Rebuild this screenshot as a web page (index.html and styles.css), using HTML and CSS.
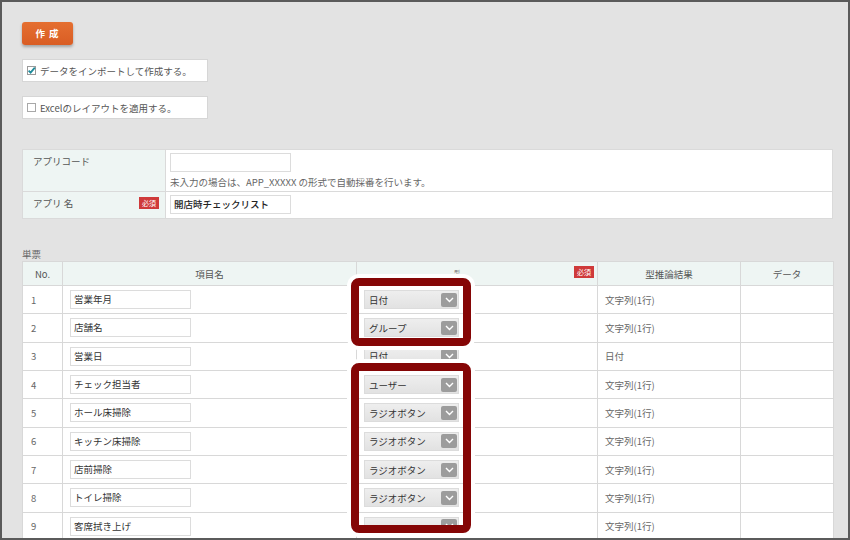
FILE: index.html
```html
<!DOCTYPE html>
<html lang="ja">
<head>
<meta charset="utf-8">
<link rel="stylesheet" href="styles.css">
</head>
<body>
<div class="frame">
  <div class="page">
    <button class="btn-create">作&nbsp;成</button>

    <div class="opt"><span class="cb cb-on"><svg width="9" height="9" viewBox="0 0 9 9"><rect x="0.5" y="0.5" width="8" height="8" fill="#fff" stroke="#9a9a9a"/><path d="M1.6 4.6 L3.6 6.6 L7.8 1.6" fill="none" stroke="#1f8a9a" stroke-width="1.8"/></svg></span>データをインポートして作成する。</div>
    <div class="opt"><span class="cb"><svg width="9" height="9" viewBox="0 0 9 9"><rect x="0.5" y="0.5" width="8" height="8" fill="#fff" stroke="#a8a8a8"/></svg></span>Excelのレイアウトを適用する。</div>

    <table class="form">
      <colgroup><col class="c-label"><col></colgroup>
      <tr class="r-code">
        <th><div class="lab">アプリコード</div></th>
        <td>
          <div class="inp"></div>
          <div class="hint">未入力の場合は、APP_XXXXX の形式で自動採番を行います。</div>
        </td>
      </tr>
      <tr class="r-name">
        <th><div class="lab lab-row"><span>アプリ 名</span><span class="req">必須</span></div></th>
        <td><div class="inp inp-val">開店時チェックリスト</div></td>
      </tr>
    </table>

    <div class="sec-label">単票</div>

    <div class="grid-wrap">
      <table class="grid">
        <colgroup>
          <col class="g1"><col class="g2"><col class="g3"><col class="g4"><col class="g5">
        </colgroup>
        <thead>
          <tr>
            <th>No.</th>
            <th>項目名</th>
            <th class="h-type"><span class="type-lbl">型</span><span class="req req-h">必須</span></th>
            <th>型推論結果</th>
            <th>データ</th>
          </tr>
        </thead>
        <tbody>
          <tr><td class="no">1</td><td><div class="inp">営業年月</div></td><td><div class="sel"><span>日付</span><i class="arr"><svg width="9" height="6" viewBox="0 0 9 6"><path d="M1 1 L4.5 4.5 L8 1" fill="none" stroke="#fff" stroke-width="1.4"/></svg></i></div></td><td class="res">文字列(1行)</td><td></td></tr>
          <tr><td class="no">2</td><td><div class="inp">店舗名</div></td><td><div class="sel"><span>グループ</span><i class="arr"><svg width="9" height="6" viewBox="0 0 9 6"><path d="M1 1 L4.5 4.5 L8 1" fill="none" stroke="#fff" stroke-width="1.4"/></svg></i></div></td><td class="res">文字列(1行)</td><td></td></tr>
          <tr><td class="no">3</td><td><div class="inp">営業日</div></td><td><div class="sel"><span>日付</span><i class="arr"><svg width="9" height="6" viewBox="0 0 9 6"><path d="M1 1 L4.5 4.5 L8 1" fill="none" stroke="#fff" stroke-width="1.4"/></svg></i></div></td><td class="res">日付</td><td></td></tr>
          <tr><td class="no">4</td><td><div class="inp">チェック担当者</div></td><td><div class="sel"><span>ユーザー</span><i class="arr"><svg width="9" height="6" viewBox="0 0 9 6"><path d="M1 1 L4.5 4.5 L8 1" fill="none" stroke="#fff" stroke-width="1.4"/></svg></i></div></td><td class="res">文字列(1行)</td><td></td></tr>
          <tr><td class="no">5</td><td><div class="inp">ホール床掃除</div></td><td><div class="sel"><span>ラジオボタン</span><i class="arr"><svg width="9" height="6" viewBox="0 0 9 6"><path d="M1 1 L4.5 4.5 L8 1" fill="none" stroke="#fff" stroke-width="1.4"/></svg></i></div></td><td class="res">文字列(1行)</td><td></td></tr>
          <tr><td class="no">6</td><td><div class="inp">キッチン床掃除</div></td><td><div class="sel"><span>ラジオボタン</span><i class="arr"><svg width="9" height="6" viewBox="0 0 9 6"><path d="M1 1 L4.5 4.5 L8 1" fill="none" stroke="#fff" stroke-width="1.4"/></svg></i></div></td><td class="res">文字列(1行)</td><td></td></tr>
          <tr><td class="no">7</td><td><div class="inp">店前掃除</div></td><td><div class="sel"><span>ラジオボタン</span><i class="arr"><svg width="9" height="6" viewBox="0 0 9 6"><path d="M1 1 L4.5 4.5 L8 1" fill="none" stroke="#fff" stroke-width="1.4"/></svg></i></div></td><td class="res">文字列(1行)</td><td></td></tr>
          <tr><td class="no">8</td><td><div class="inp">トイレ掃除</div></td><td><div class="sel"><span>ラジオボタン</span><i class="arr"><svg width="9" height="6" viewBox="0 0 9 6"><path d="M1 1 L4.5 4.5 L8 1" fill="none" stroke="#fff" stroke-width="1.4"/></svg></i></div></td><td class="res">文字列(1行)</td><td></td></tr>
          <tr><td class="no">9</td><td><div class="inp">客席拭き上げ</div></td><td><div class="sel sel-cut"><span>ラジオボタン</span><i class="arr"><svg width="9" height="6" viewBox="0 0 9 6"><path d="M1 1 L4.5 4.5 L8 1" fill="none" stroke="#fff" stroke-width="1.4"/></svg></i></div></td><td class="res">文字列(1行)</td><td></td></tr>
        </tbody>
      </table>
      <div class="hl hl-1"></div>
      <div class="hl hl-2"></div>
    </div>
  </div>
</div>
</body>
</html>
```

FILE: styles.css
```css
* { box-sizing: border-box; }
html, body { margin: 0; padding: 0; }
body {
  width: 850px;
  height: 540px;
  overflow: hidden;
  font-family: "Noto Sans CJK JP", "Noto Sans", sans-serif;
  font-size: 9.5px;
  color: #555;
}
.frame {
  width: 850px;
  height: 540px;
  border: 2px solid #5b5b5b;
  background: #e3e3e3;
  overflow: hidden;
}
.page {
  padding: 20px 15px 0 20px;
  display: flex;
  flex-direction: column;
  align-items: flex-start;
}
.btn-create {
  width: 51px;
  height: 23px;
  border: 0;
  border-radius: 3px;
  background: linear-gradient(#e56f31, #d95d24);
  box-shadow: 0 2px 3px rgba(0,0,0,0.28);
  color: #fff;
  font-family: inherit;
  font-size: 9.5px;
  font-weight: bold;
  letter-spacing: 1px;
  padding: 0;
  line-height: 23px;
}
.opt {
  margin-top: 14px;
  width: 186px;
  height: 23px;
  background: #fff;
  border: 1px solid #d6d6d6;
  display: flex;
  align-items: center;
  padding-left: 4px;
  color: #555;
}
.cb { display: inline-flex; width: 9px; height: 9px; margin-right: 4px; }
.cb svg { display: block; }

.form {
  margin-top: 30px;
  width: 811px;
  border-collapse: collapse;
  table-layout: fixed;
  background: #fff;
  border: 1px solid #d9d9d9;
}
.form .c-label { width: 143px; }
.form th {
  background: #eef5f3;
  border: 1px solid #dadada;
  font-weight: normal;
  text-align: left;
  vertical-align: top;
  padding: 0;
}
.form td {
  border: 1px solid #dadada;
  padding: 0 0 0 4px;
  vertical-align: top;
}
.r-code { height: 42px; }
.r-name { height: 27px; }
.lab { padding: 4px 0 0 10px; color: #555; }
.lab-row {
  display: flex;
  justify-content: space-between;
  align-items: center;
  padding: 4px 6px 0 10px;
}
.r-code td { padding-top: 3px; }
.r-name td { padding-top: 3px; }
.hint { margin-top: 3px; color: #666; }

.inp {
  width: 121px;
  height: 19px;
  background: #fff;
  border: 1px solid #dcdcdc;
  color: #333;
  padding-left: 3px;
  line-height: 17px;
  white-space: nowrap;
}
.inp-val { font-weight: 500; color: #222; }

.req {
  display: inline-block;
  background: #cf3a3a;
  color: #fff;
  font-size: 7px;
  line-height: 12px;
  height: 12px;
  width: 20px;
  text-align: center;
}

.sec-label {
  margin-top: 28px;
  height: 14px;
  color: #666;
  line-height: 14px;
}

.grid-wrap { position: relative; width: 811px; }
.grid {
  width: 811px;
  border-collapse: collapse;
  table-layout: fixed;
  background: #fff;
}
.grid .g1 { width: 40px; }
.grid .g2 { width: 294px; }
.grid .g3 { width: 241px; }
.grid .g4 { width: 143px; }
.grid .g5 { width: 93px; }
.grid th {
  height: 24px;
  background: #eef5f3;
  border: 1px solid #d8d8d8;
  font-weight: normal;
  color: #555;
  padding: 0;
  text-align: center;
}
.grid td {
  height: 28.33px;
  border: 1px solid #d8d8d8;
  padding: 0 0 0 7px;
  vertical-align: middle;
  color: #555;
}
.grid td.no { padding-left: 8px; color: #666; }
.grid td.res { padding-left: 7px; color: #666; }
.h-type { position: relative; }
.type-lbl { font-size: 6px; position: relative; left: -20px; top: -3px; color: #777; }
.req-h { position: absolute; right: 3px; top: 4px; }

.sel {
  width: 95px;
  height: 19px;
  border: 1px solid #dcdcdc;
  background: linear-gradient(#eeeeee, #e2e2e2);
  display: flex;
  align-items: center;
  justify-content: space-between;
  padding: 0 1px 0 4px;
  color: #333;
}
.sel-cut span { visibility: hidden; }
.arr {
  width: 16px;
  height: 14px;
  background: #9c9c9c;
  border-radius: 2px;
  display: flex;
  align-items: center;
  justify-content: center;
}
.arr svg { display: block; }

.hl {
  position: absolute;
  left: 329px;
  width: 120px;
  border: 8px solid #850606;
  border-radius: 8px;
  box-shadow: 0 0 0 4px #fff;
}
.hl-1 { top: 17px; height: 68px; }
.hl-2 { top: 102px; height: 170px; }
```
